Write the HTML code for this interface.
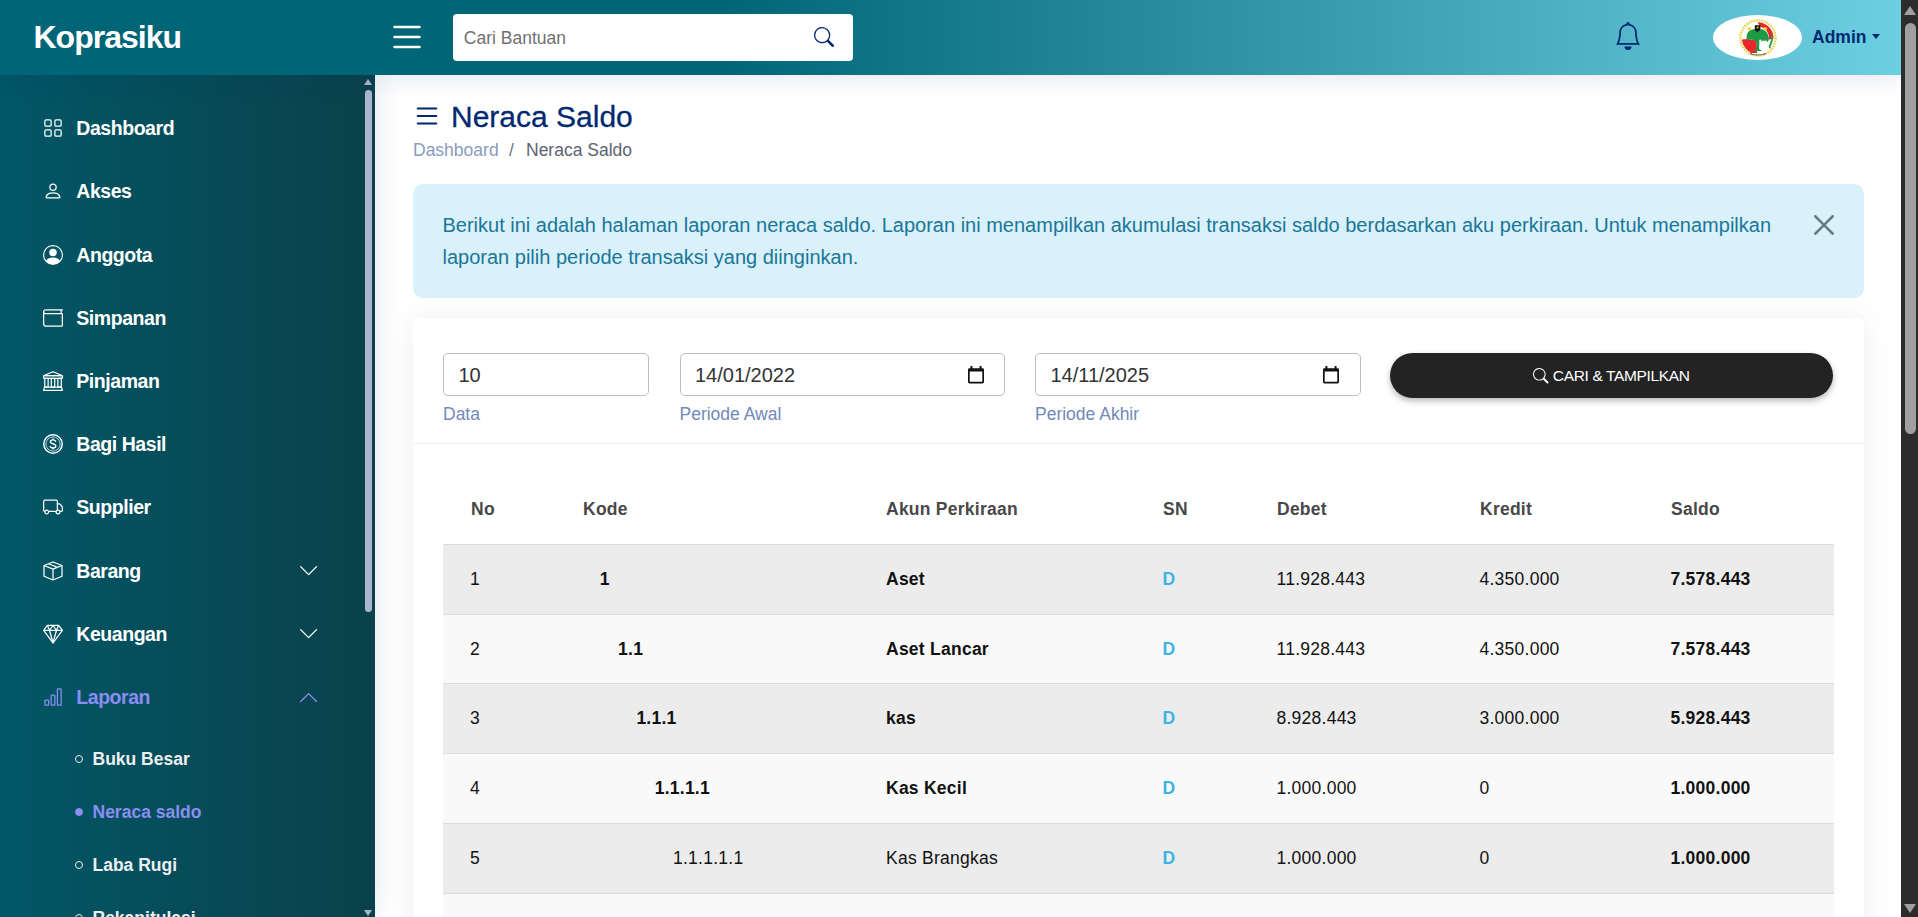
<!DOCTYPE html>
<html lang="id">
<head>
<meta charset="utf-8">
<title>Neraca Saldo - Koprasiku</title>
<style>
*{box-sizing:border-box;margin:0;padding:0}
html,body{width:1918px;height:917px;overflow:hidden;background:#fff;font-family:"Liberation Sans",sans-serif}
.ic{position:absolute;display:block;overflow:visible}
.tx{position:absolute;white-space:nowrap}
#main{position:absolute;left:0;top:0;width:1901px;height:917px;background:#fff;z-index:1}
#alert{position:absolute;left:413px;top:184px;width:1451px;height:113.7px;background:#d9f1fa;border-radius:10px}
#card{position:absolute;left:413px;top:318.3px;width:1451px;height:700px;background:#fff;border-radius:6px;box-shadow:0 0 30px rgba(0,0,0,.07)}
.inp{position:absolute;top:353px;height:42.7px;border:1.25px solid #bdbdbd;border-radius:5px;background:#fff}
#btn{position:absolute;left:1389.8px;top:352.8px;width:443.7px;height:44.9px;background:#232323;border-radius:23px;box-shadow:0 3px 6px rgba(0,0,0,.28)}
#divider{position:absolute;left:413px;top:442.5px;width:1451px;height:1.5px;background:#efefef}
.row{position:absolute;left:443px;width:1391px;height:70px;border-top:1px solid #dcdcdc}
#header{position:absolute;left:0;top:0;width:1901px;height:75px;background:linear-gradient(to right,#006576 0%,#006576 38%,#6dd0e2 100%);z-index:5;box-shadow:0 2.5px 25px rgba(1,41,112,.12)}
#logo{position:absolute;left:0;top:0;width:375px;height:75px;background:#006576}
#search{position:absolute;left:453px;top:14px;width:400px;height:46.5px;background:#fff;border-radius:4px;z-index:6}
#avatar{position:absolute;left:1712.6px;top:15px;width:89.4px;height:44.7px;border-radius:50%;background:#fff;z-index:6;display:flex;align-items:center;justify-content:center}
#caret{position:absolute;left:1871.6px;top:34.2px;width:0;height:0;border-left:4.6px solid transparent;border-right:4.6px solid transparent;border-top:5px solid #012970;z-index:7}
#sidebar{position:absolute;left:0;top:75px;width:375px;height:842px;background:linear-gradient(to right,#025767 0%,#0a414a 100%);overflow:hidden;z-index:4;box-shadow:0 0 25px rgba(1,41,112,.12)}
#sidebar .ic,#sidebar .tx{z-index:5}
.dot{position:absolute;left:74.8px;width:8.6px;height:8.6px;border:1.4px solid #e9edf1;border-radius:50%}
#sbthumb{position:absolute;left:365px;top:15px;width:6.8px;height:522px;border-radius:4px;background:#aab5d1}
#sbup{position:absolute;left:364.2px;top:3.9px;width:0;height:0;border-left:4.3px solid transparent;border-right:4.3px solid transparent;border-bottom:6px solid #aab5d1}
#sbdown{position:absolute;left:364.2px;top:835px;width:0;height:0;border-left:4.3px solid transparent;border-right:4.3px solid transparent;border-top:6px solid #aab5d1}
#pscroll{position:absolute;left:1901px;top:0;width:17px;height:917px;background:#2c2c2c;z-index:10}
#pthumb{position:absolute;left:4px;top:22.9px;width:11px;height:411.3px;border-radius:6px;background:#a0a0a0}
#pup{position:absolute;left:3.2px;top:6px;width:0;height:0;border-left:6.2px solid transparent;border-right:6.2px solid transparent;border-bottom:9.6px solid #a0a0a0}
#pdown{position:absolute;left:3.2px;top:904px;width:0;height:0;border-left:6.2px solid transparent;border-right:6.2px solid transparent;border-top:9.6px solid #a0a0a0}
</style>
</head>
<body>
<div id="main">
<svg class="ic" style="left:412.3px;top:101px;color:#012970" width="30" height="30" viewBox="0 0 16 16"><path fill="currentColor" fill-rule="evenodd" d="M2.5 12a.5.5 0 0 1 .5-.5h10a.5.5 0 0 1 0 1H3a.5.5 0 0 1-.5-.5zm0-4a.5.5 0 0 1 .5-.5h10a.5.5 0 0 1 0 1H3a.5.5 0 0 1-.5-.5zm0-4a.5.5 0 0 1 .5-.5h10a.5.5 0 0 1 0 1H3a.5.5 0 0 1-.5-.5z"/></svg>
<div class="tx " style="left:451px;top:97.44px;font-size:30px;line-height:39.0px;color:#012970;font-weight:normal;-webkit-text-stroke:0.3px #012970">Neraca Saldo</div>
<div class="tx " style="left:413px;top:138.74px;font-size:17.5px;line-height:22.75px;color:#899bbd;font-weight:normal">Dashboard</div>
<div class="tx " style="left:509px;top:138.74px;font-size:17.5px;line-height:22.75px;color:#6c757d;font-weight:normal">/</div>
<div class="tx " style="left:526px;top:138.74px;font-size:17.5px;line-height:22.75px;color:#5c6470;font-weight:normal">Neraca Saldo</div>
<div id="alert"></div>
<div class="tx " style="left:442.5px;top:211.86px;font-size:20px;line-height:26.0px;color:#1b7698;font-weight:normal">Berikut ini adalah halaman laporan neraca saldo. Laporan ini menampilkan akumulasi transaksi saldo berdasarkan aku perkiraan. Untuk menampilkan</div>
<div class="tx " style="left:442.5px;top:243.96px;font-size:20px;line-height:26.0px;color:#1b7698;font-weight:normal">laporan pilih periode transaksi yang diinginkan.</div>
<svg class="ic" style="left:1814px;top:215px;color:rgba(0,0,0,.5)" width="20" height="20" viewBox="0 0 16 16"><path fill="currentColor" d="M.293.293a1 1 0 0 1 1.414 0L8 6.586 14.293.293a1 1 0 1 1 1.414 1.414L9.414 8l6.293 6.293a1 1 0 0 1-1.414 1.414L8 9.414l-6.293 6.293a1 1 0 0 1-1.414-1.414L6.586 8 .293 1.707a1 1 0 0 1 0-1.414z"/></svg>
<div id="card"></div>
<div class="inp" style="left:443px;width:206px"></div>
<div class="inp" style="left:679.5px;width:325.5px"></div>
<div class="inp" style="left:1035px;width:325.5px"></div>
<div class="tx " style="left:458.5px;top:362.06px;font-size:20px;line-height:26.0px;color:#333;font-weight:normal">10</div>
<div class="tx " style="left:695px;top:362.06px;font-size:20px;line-height:26.0px;color:#333;font-weight:normal">14/01/2022</div>
<div class="tx " style="left:1050.5px;top:362.06px;font-size:20px;line-height:26.0px;color:#333;font-weight:normal">14/11/2025</div>
<svg class="ic" style="left:968px;top:365.7px" width="16" height="17.5" viewBox="0 0 16 17.5"><path fill="#111" fill-rule="evenodd" d="M1.4 2.3h13.2a1.4 1.4 0 0 1 1.4 1.4v12.4a1.4 1.4 0 0 1-1.4 1.4H1.4A1.4 1.4 0 0 1 0 16.1V3.7a1.4 1.4 0 0 1 1.4-1.4zM1.7 5.4v10.4h12.6V5.4z"/><rect fill="#111" x="2.4" y="0" width="2" height="3" rx=".6"/><rect fill="#111" x="11.6" y="0" width="2" height="3" rx=".6"/></svg>
<svg class="ic" style="left:1323.3px;top:365.7px" width="16" height="17.5" viewBox="0 0 16 17.5"><path fill="#111" fill-rule="evenodd" d="M1.4 2.3h13.2a1.4 1.4 0 0 1 1.4 1.4v12.4a1.4 1.4 0 0 1-1.4 1.4H1.4A1.4 1.4 0 0 1 0 16.1V3.7a1.4 1.4 0 0 1 1.4-1.4zM1.7 5.4v10.4h12.6V5.4z"/><rect fill="#111" x="2.4" y="0" width="2" height="3" rx=".6"/><rect fill="#111" x="11.6" y="0" width="2" height="3" rx=".6"/></svg>
<div class="tx " style="left:443px;top:402.64px;font-size:17.5px;line-height:22.75px;color:#7189b8;font-weight:normal">Data</div>
<div class="tx " style="left:679.5px;top:402.64px;font-size:17.5px;line-height:22.75px;color:#7189b8;font-weight:normal">Periode Awal</div>
<div class="tx " style="left:1035px;top:402.64px;font-size:17.5px;line-height:22.75px;color:#7189b8;font-weight:normal">Periode Akhir</div>
<div id="btn"></div>
<svg class="ic" style="left:1532.7px;top:367.6px;color:#fff" width="15.5" height="15.5" viewBox="0 0 16 16"><path fill="currentColor" d="M11.742 10.344a6.5 6.5 0 1 0-1.397 1.398h-.001c.03.04.062.078.098.115l3.85 3.85a1 1 0 0 0 1.415-1.414l-3.85-3.85a1.007 1.007 0 0 0-.115-.1zM12 6.5a5.5 5.5 0 1 1-11 0 5.5 5.5 0 0 1 11 0z"/></svg>
<div class="tx " style="left:1552.8px;top:366.4px;font-size:15.5px;line-height:20.15px;color:#fff;font-weight:normal;letter-spacing:-0.35px">CARI &amp; TAMPILKAN</div>
<div id="divider"></div>
<div class="tx " style="left:471px;top:497.54px;font-size:17.5px;line-height:22.75px;color:#484848;font-weight:bold;letter-spacing:0.25px">No</div>
<div class="tx " style="left:583px;top:497.54px;font-size:17.5px;line-height:22.75px;color:#484848;font-weight:bold;letter-spacing:0.25px">Kode</div>
<div class="tx " style="left:886px;top:497.54px;font-size:17.5px;line-height:22.75px;color:#484848;font-weight:bold;letter-spacing:0.25px">Akun Perkiraan</div>
<div class="tx " style="left:1163px;top:497.54px;font-size:17.5px;line-height:22.75px;color:#484848;font-weight:bold;letter-spacing:0.25px">SN</div>
<div class="tx " style="left:1277px;top:497.54px;font-size:17.5px;line-height:22.75px;color:#484848;font-weight:bold;letter-spacing:0.25px">Debet</div>
<div class="tx " style="left:1480px;top:497.54px;font-size:17.5px;line-height:22.75px;color:#484848;font-weight:bold;letter-spacing:0.25px">Kredit</div>
<div class="tx " style="left:1671px;top:497.54px;font-size:17.5px;line-height:22.75px;color:#484848;font-weight:bold;letter-spacing:0.25px">Saldo</div>
<div class="row" style="top:544.00px;background:#ececec"></div>
<div class="tx " style="left:470px;top:567.64px;font-size:17.5px;line-height:22.75px;color:#111;font-weight:normal;letter-spacing:0.25px">1</div>
<div class="tx " style="left:599.8px;top:567.64px;font-size:17.5px;line-height:22.75px;color:#111;font-weight:bold;letter-spacing:0.25px">1</div>
<div class="tx " style="left:886px;top:567.64px;font-size:17.5px;line-height:22.75px;color:#111;font-weight:bold;letter-spacing:0.25px">Aset</div>
<div class="tx " style="left:1162.5px;top:567.64px;font-size:17.5px;line-height:22.75px;color:#3ab4e4;font-weight:bold">D</div>
<div class="tx " style="left:1276.5px;top:567.64px;font-size:17.5px;line-height:22.75px;color:#111;font-weight:normal;letter-spacing:0.25px">11.928.443</div>
<div class="tx " style="left:1479.5px;top:567.64px;font-size:17.5px;line-height:22.75px;color:#111;font-weight:normal;letter-spacing:0.25px">4.350.000</div>
<div class="tx " style="left:1670.5px;top:567.64px;font-size:17.5px;line-height:22.75px;color:#111;font-weight:bold;letter-spacing:0.25px">7.578.443</div>
<div class="row" style="top:614.00px;background:#f9f9f9"></div>
<div class="tx " style="left:470px;top:637.64px;font-size:17.5px;line-height:22.75px;color:#111;font-weight:normal;letter-spacing:0.25px">2</div>
<div class="tx " style="left:618.1px;top:637.64px;font-size:17.5px;line-height:22.75px;color:#111;font-weight:bold;letter-spacing:0.25px">1.1</div>
<div class="tx " style="left:886px;top:637.64px;font-size:17.5px;line-height:22.75px;color:#111;font-weight:bold;letter-spacing:0.25px">Aset Lancar</div>
<div class="tx " style="left:1162.5px;top:637.64px;font-size:17.5px;line-height:22.75px;color:#3ab4e4;font-weight:bold">D</div>
<div class="tx " style="left:1276.5px;top:637.64px;font-size:17.5px;line-height:22.75px;color:#111;font-weight:normal;letter-spacing:0.25px">11.928.443</div>
<div class="tx " style="left:1479.5px;top:637.64px;font-size:17.5px;line-height:22.75px;color:#111;font-weight:normal;letter-spacing:0.25px">4.350.000</div>
<div class="tx " style="left:1670.5px;top:637.64px;font-size:17.5px;line-height:22.75px;color:#111;font-weight:bold;letter-spacing:0.25px">7.578.443</div>
<div class="row" style="top:683.00px;background:#ececec"></div>
<div class="tx " style="left:470px;top:706.64px;font-size:17.5px;line-height:22.75px;color:#111;font-weight:normal;letter-spacing:0.25px">3</div>
<div class="tx " style="left:636.4px;top:706.64px;font-size:17.5px;line-height:22.75px;color:#111;font-weight:bold;letter-spacing:0.25px">1.1.1</div>
<div class="tx " style="left:886px;top:706.64px;font-size:17.5px;line-height:22.75px;color:#111;font-weight:bold;letter-spacing:0.25px">kas</div>
<div class="tx " style="left:1162.5px;top:706.64px;font-size:17.5px;line-height:22.75px;color:#3ab4e4;font-weight:bold">D</div>
<div class="tx " style="left:1276.5px;top:706.64px;font-size:17.5px;line-height:22.75px;color:#111;font-weight:normal;letter-spacing:0.25px">8.928.443</div>
<div class="tx " style="left:1479.5px;top:706.64px;font-size:17.5px;line-height:22.75px;color:#111;font-weight:normal;letter-spacing:0.25px">3.000.000</div>
<div class="tx " style="left:1670.5px;top:706.64px;font-size:17.5px;line-height:22.75px;color:#111;font-weight:bold;letter-spacing:0.25px">5.928.443</div>
<div class="row" style="top:753.00px;background:#f9f9f9"></div>
<div class="tx " style="left:470px;top:776.64px;font-size:17.5px;line-height:22.75px;color:#111;font-weight:normal;letter-spacing:0.25px">4</div>
<div class="tx " style="left:654.7px;top:776.64px;font-size:17.5px;line-height:22.75px;color:#111;font-weight:bold;letter-spacing:0.25px">1.1.1.1</div>
<div class="tx " style="left:886px;top:776.64px;font-size:17.5px;line-height:22.75px;color:#111;font-weight:bold;letter-spacing:0.25px">Kas Kecil</div>
<div class="tx " style="left:1162.5px;top:776.64px;font-size:17.5px;line-height:22.75px;color:#3ab4e4;font-weight:bold">D</div>
<div class="tx " style="left:1276.5px;top:776.64px;font-size:17.5px;line-height:22.75px;color:#111;font-weight:normal;letter-spacing:0.25px">1.000.000</div>
<div class="tx " style="left:1479.5px;top:776.64px;font-size:17.5px;line-height:22.75px;color:#111;font-weight:normal;letter-spacing:0.25px">0</div>
<div class="tx " style="left:1670.5px;top:776.64px;font-size:17.5px;line-height:22.75px;color:#111;font-weight:bold;letter-spacing:0.25px">1.000.000</div>
<div class="row" style="top:823.00px;background:#ececec"></div>
<div class="tx " style="left:470px;top:846.64px;font-size:17.5px;line-height:22.75px;color:#111;font-weight:normal;letter-spacing:0.25px">5</div>
<div class="tx " style="left:673.0px;top:846.64px;font-size:17.5px;line-height:22.75px;color:#111;font-weight:normal;letter-spacing:0.25px">1.1.1.1.1</div>
<div class="tx " style="left:886px;top:846.64px;font-size:17.5px;line-height:22.75px;color:#111;font-weight:normal;letter-spacing:0.25px">Kas Brangkas</div>
<div class="tx " style="left:1162.5px;top:846.64px;font-size:17.5px;line-height:22.75px;color:#3ab4e4;font-weight:bold">D</div>
<div class="tx " style="left:1276.5px;top:846.64px;font-size:17.5px;line-height:22.75px;color:#111;font-weight:normal;letter-spacing:0.25px">1.000.000</div>
<div class="tx " style="left:1479.5px;top:846.64px;font-size:17.5px;line-height:22.75px;color:#111;font-weight:normal;letter-spacing:0.25px">0</div>
<div class="tx " style="left:1670.5px;top:846.64px;font-size:17.5px;line-height:22.75px;color:#111;font-weight:bold;letter-spacing:0.25px">1.000.000</div>
<div class="row" style="top:893.00px;background:#f9f9f9"></div>
</div>
<div id="header"><div id="logo"></div></div>
<div class="tx " style="left:33.5px;top:16.88px;font-size:32px;line-height:41.6px;color:#fff;font-weight:bold;z-index:7;letter-spacing:-1px">Koprasiku</div>
<svg class="ic" style="left:386.85px;top:17px;color:#fff;z-index:7" width="40" height="40" viewBox="0 0 16 16"><path fill="currentColor" fill-rule="evenodd" d="M2.5 12a.5.5 0 0 1 .5-.5h10a.5.5 0 0 1 0 1H3a.5.5 0 0 1-.5-.5zm0-4a.5.5 0 0 1 .5-.5h10a.5.5 0 0 1 0 1H3a.5.5 0 0 1-.5-.5zm0-4a.5.5 0 0 1 .5-.5h10a.5.5 0 0 1 0 1H3a.5.5 0 0 1-.5-.5z"/></svg>
<div id="search"></div>
<div class="tx " style="left:463.8px;top:26.64px;font-size:17.5px;line-height:22.75px;color:#707070;font-weight:normal;z-index:7">Cari Bantuan</div>
<svg class="ic" style="left:814.4px;top:27px;color:#012970;z-index:7" width="20" height="20" viewBox="0 0 16 16"><path fill="currentColor" d="M11.742 10.344a6.5 6.5 0 1 0-1.397 1.398h-.001c.03.04.062.078.098.115l3.85 3.85a1 1 0 0 0 1.415-1.414l-3.85-3.85a1.007 1.007 0 0 0-.115-.1zM12 6.5a5.5 5.5 0 1 1-11 0 5.5 5.5 0 0 1 11 0z"/></svg>
<svg class="ic" style="left:1614.2px;top:21.5px;color:#012970;z-index:7" width="28" height="28" viewBox="0 0 16 16"><path fill="currentColor" d="M8 16a2 2 0 0 0 2-2H6a2 2 0 0 0 2 2zM8 1.918l-.797.161A4.002 4.002 0 0 0 4 6c0 .628-.134 2.197-.459 3.742-.16.767-.376 1.566-.663 2.258h10.244c-.287-.692-.502-1.49-.663-2.258C12.134 8.197 12 6.628 12 6a4.002 4.002 0 0 0-3.203-3.92L8 1.917zM14.22 12c.223.447.481.801.78 1H1c.299-.199.557-.553.78-1C2.68 10.2 3 6.88 3 6c0-2.42 1.72-4.44 4.005-4.901a1 1 0 1 1 1.99 0A5.002 5.002 0 0 1 13 6c0 .88.32 4.2 1.22 6z"/></svg>
<div id="avatar"></div>
<svg class="ic" style="left:1738px;top:17.6px;z-index:7" width="40" height="40" viewBox="0 0 40 40"><circle cx="20" cy="20" r="17.6" fill="#fff" stroke="#e4d444" stroke-width="2.4" stroke-dasharray="1.6 1"/><path d="M19.5 4.2A16 16 0 0 1 35.6 20.5L31 21.5A12 12 0 0 0 22 8.5z" fill="#e8262c"/><path d="M3.8 21.5 Q5 30 13 35 L19 35 L18.6 23 Q12 20 3.8 21.5z" fill="#e8262c"/><path d="M8.5 21 Q8 13 14 11.5 L17 11 L20 13.8 L23 11 Q30 12 31 21 L30 24 Q26 22 22 24 L21 31 L24 33 L15 33 L18.5 31 L18.6 24 Q14 20 9 22z" fill="#1e9a45"/><path d="M21.3 22 L23 21.5 L23.5 25 L25 21.5 L26.5 25 L28 21.5 L29.5 26 L31.5 24 L30 30 L25.5 32.5 L21.5 31z" fill="#fff"/><path d="M33 14 L35 22 L32 31 L30.5 29 L33 22z" fill="#2f9f52"/><path d="M16.8 7.3h5.6v4.6l-2.8 2.4-2.8-2.4z" fill="#111"/><circle cx="19.6" cy="9.6" r="1" fill="#e8d000"/><circle cx="11.4" cy="10.9" r="1.8" fill="#efd84a"/><circle cx="27.2" cy="10.9" r="1.8" fill="#efd84a"/><path d="M12 35.5 Q20 38.5 28 35.5" fill="none" stroke="#444" stroke-width="1.2" stroke-dasharray=".8 .4"/></svg>
<div class="tx " style="left:1812px;top:26.24px;font-size:17.5px;line-height:22.75px;color:#012970;font-weight:bold;z-index:7">Admin</div>
<div id="caret"></div>
<div id="sidebar">
<svg class="ic" style="left:43.4px;top:43.1px;color:#fff" width="20" height="20" viewBox="0 0 16 16"><g fill="none" stroke="currentColor" stroke-width="1"><rect x="1.5" y="1.5" width="5" height="5" rx="1"/><rect x="9.5" y="1.5" width="5" height="5" rx="1"/><rect x="1.5" y="9.5" width="5" height="5" rx="1"/><rect x="9.5" y="9.5" width="5" height="5" rx="1"/></g></svg>
<div class="tx " style="left:76.3px;top:41.28px;font-size:19.5px;line-height:25.35px;color:#fff;font-weight:bold;letter-spacing:-0.45px">Dashboard</div>
<svg class="ic" style="left:43.4px;top:106.3px;color:#fff" width="20" height="20" viewBox="0 0 16 16"><path fill="currentColor" d="M8 8a3 3 0 1 0 0-6 3 3 0 0 0 0 6Zm2-3a2 2 0 1 1-4 0 2 2 0 0 1 4 0Zm4 8c0 1-1 1-1 1H3s-1 0-1-1 1-4 6-4 6 3 6 4Zm-1-.004c-.001-.246-.154-.986-.832-1.664C11.516 10.68 10.289 10 8 10c-2.29 0-3.516.68-4.168 1.332-.678.678-.83 1.418-.832 1.664h10Z"/></svg>
<div class="tx " style="left:76.3px;top:104.48px;font-size:19.5px;line-height:25.35px;color:#fff;font-weight:bold;letter-spacing:-0.45px">Akses</div>
<svg class="ic" style="left:43.4px;top:169.5px;color:#fff" width="20" height="20" viewBox="0 0 16 16"><path fill="currentColor" d="M11 6a3 3 0 1 1-6 0 3 3 0 0 1 6 0z"/><path fill="currentColor" fill-rule="evenodd" d="M0 8a8 8 0 1 1 16 0A8 8 0 0 1 0 8zm8-7a7 7 0 0 0-5.468 11.37C3.242 11.226 4.805 10 8 10s4.757 1.225 5.468 2.37A7 7 0 0 0 8 1z"/></svg>
<div class="tx " style="left:76.3px;top:167.68px;font-size:19.5px;line-height:25.35px;color:#fff;font-weight:bold;letter-spacing:-0.45px">Anggota</div>
<svg class="ic" style="left:43.4px;top:232.7px;color:#fff" width="20" height="20" viewBox="0 0 16 16"><path fill="currentColor" fill-rule="evenodd" d="M0 3a2 2 0 0 1 2-2h13.5a.5.5 0 0 1 0 1H15v2a1 1 0 0 1 1 1v8.5a1.5 1.5 0 0 1-1.5 1.5h-12A2.5 2.5 0 0 1 0 12.5V3zm1 1.732V12.5A1.5 1.5 0 0 0 2.5 14h12a.5.5 0 0 0 .5-.5V5H2a1.99 1.99 0 0 1-1-.268zM1 3a1 1 0 0 0 1 1h12V2H2a1 1 0 0 0-1 1z"/></svg>
<div class="tx " style="left:76.3px;top:230.88px;font-size:19.5px;line-height:25.35px;color:#fff;font-weight:bold;letter-spacing:-0.45px">Simpanan</div>
<svg class="ic" style="left:43.4px;top:295.9px;color:#fff" width="20" height="20" viewBox="0 0 16 16"><g fill="none" stroke="currentColor" stroke-width="1" stroke-linejoin="round"><path d="M8 .6 15.2 3.6H.8z"/><rect x=".5" y="3.6" width="15" height="2.3" rx=".4"/><rect x="1.4" y="5.9" width="2.7" height="7"/><rect x="6.65" y="5.9" width="2.7" height="7"/><rect x="11.9" y="5.9" width="2.7" height="7"/><path d="M1.2 12.9h13.6l.7 2.6H.5z"/></g></svg>
<div class="tx " style="left:76.3px;top:294.08px;font-size:19.5px;line-height:25.35px;color:#fff;font-weight:bold;letter-spacing:-0.45px">Pinjaman</div>
<svg class="ic" style="left:43.4px;top:359.1px;color:#fff" width="20" height="20" viewBox="0 0 16 16"><g fill="none" stroke="currentColor"><circle cx="8" cy="8" r="7.4" stroke-width="1.15"/><circle cx="8" cy="8" r="5.7" stroke-width=".6"/><path stroke-width="1.15" stroke-linecap="round" d="M10.1 5.7C9.8 5.1 9 4.7 8 4.7 6.8 4.7 5.9 5.3 5.9 6.3 5.9 8.2 10.2 7.4 10.2 9.6 10.2 10.6 9.3 11.2 8 11.2 6.9 11.2 6.1 10.8 5.8 10.1M8 4v.7M8 11.2v.8"/></g></svg>
<div class="tx " style="left:76.3px;top:357.28px;font-size:19.5px;line-height:25.35px;color:#fff;font-weight:bold;letter-spacing:-0.45px">Bagi Hasil</div>
<svg class="ic" style="left:43.4px;top:422.3px;color:#fff" width="20" height="20" viewBox="0 0 16 16"><path fill="currentColor" d="M0 3.5A1.5 1.5 0 0 1 1.5 2h9A1.5 1.5 0 0 1 12 3.5V5h1.02a1.5 1.5 0 0 1 1.17.563l1.481 1.85a1.5 1.5 0 0 1 .329.938V10.5a1.5 1.5 0 0 1-1.5 1.5H14a2 2 0 1 1-4 0H5a2 2 0 1 1-3.998-.085A1.5 1.5 0 0 1 0 10.5v-7zm1.294 7.456A1.999 1.999 0 0 1 4.732 11h5.536a2.01 2.01 0 0 1 .732-.732V3.5a.5.5 0 0 0-.5-.5h-9a.5.5 0 0 0-.5.5v7a.5.5 0 0 0 .294.456zM12 10a2 2 0 0 1 1.732 1h.768a.5.5 0 0 0 .5-.5V8.35a.5.5 0 0 0-.11-.312l-1.48-1.85A.5.5 0 0 0 13.02 6H12v4zm-9 1a1 1 0 1 0 0 2 1 1 0 0 0 0-2zm9 0a1 1 0 1 0 0 2 1 1 0 0 0 0-2z"/></svg>
<div class="tx " style="left:76.3px;top:420.48px;font-size:19.5px;line-height:25.35px;color:#fff;font-weight:bold;letter-spacing:-0.45px">Supplier</div>
<svg class="ic" style="left:43.4px;top:485.5px;color:#fff" width="20" height="20" viewBox="0 0 16 16"><g fill="none" stroke="currentColor" stroke-width="1" stroke-linejoin="round"><path d="M8 .8 15.2 3.6v8.6L8 15.2.8 12.2V3.6z"/><path d="M.8 3.6 8 6.5l7.2-2.9M8 6.5v8.7M4.4 2.2l7.2 2.9"/></g></svg>
<div class="tx " style="left:76.3px;top:483.68px;font-size:19.5px;line-height:25.35px;color:#fff;font-weight:bold;letter-spacing:-0.45px">Barang</div>
<svg class="ic" style="left:297.6px;top:485.15px;color:#fff" width="21.2" height="21.2" viewBox="0 0 16 16"><path fill="currentColor" fill-rule="evenodd" d="M1.646 4.646a.5.5 0 0 1 .708 0L8 10.293l5.646-5.647a.5.5 0 0 1 .708.708l-6 6a.5.5 0 0 1-.708 0l-6-6a.5.5 0 0 1 0-.708z"/></svg>
<svg class="ic" style="left:43.4px;top:548.7px;color:#fff" width="20" height="20" viewBox="0 0 16 16"><g fill="none" stroke="currentColor" stroke-width="1" stroke-linejoin="round"><path d="M3.5 1h9l3 4-7.5 10L.5 5z"/><path d="M.5 5h15M3.5 1 5.2 5 8 15 10.8 5 12.5 1M5.2 5 8 1.2 10.8 5"/></g></svg>
<div class="tx " style="left:76.3px;top:546.88px;font-size:19.5px;line-height:25.35px;color:#fff;font-weight:bold;letter-spacing:-0.45px">Keuangan</div>
<svg class="ic" style="left:297.6px;top:548.35px;color:#fff" width="21.2" height="21.2" viewBox="0 0 16 16"><path fill="currentColor" fill-rule="evenodd" d="M1.646 4.646a.5.5 0 0 1 .708 0L8 10.293l5.646-5.647a.5.5 0 0 1 .708.708l-6 6a.5.5 0 0 1-.708 0l-6-6a.5.5 0 0 1 0-.708z"/></svg>
<svg class="ic" style="left:43.4px;top:611.9px;color:#8b8df2" width="20" height="20" viewBox="0 0 16 16"><path fill="currentColor" d="M4 11H2v3h2v-3zm5-4H7v7h2V7zm5-5v12h-2V2h2zm-2-1a1 1 0 0 0-1 1v12a1 1 0 0 0 1 1h2a1 1 0 0 0 1-1V2a1 1 0 0 0-1-1h-2zM6 7a1 1 0 0 1 1-1h2a1 1 0 0 1 1 1v7a1 1 0 0 1-1 1H7a1 1 0 0 1-1-1V7zm-5 4a1 1 0 0 1 1-1h2a1 1 0 0 1 1 1v3a1 1 0 0 1-1 1H2a1 1 0 0 1-1-1v-3z"/></svg>
<div class="tx " style="left:76.3px;top:610.08px;font-size:19.5px;line-height:25.35px;color:#8b8df2;font-weight:bold;letter-spacing:-0.45px">Laporan</div>
<svg class="ic" style="left:297.6px;top:611.55px;color:#8b8df2" width="21.2" height="21.2" viewBox="0 0 16 16"><path fill="currentColor" fill-rule="evenodd" d="M7.646 4.646a.5.5 0 0 1 .708 0l6 6a.5.5 0 0 1-.708.708L8 5.707l-5.646 5.647a.5.5 0 0 1-.708-.708l6-6z"/></svg>
<div class="dot" style="top:679.50px"></div>
<div class="tx " style="left:92.5px;top:672.74px;font-size:17.5px;line-height:22.75px;color:#eef0f3;font-weight:bold">Buku Besar</div>
<div class="dot" style="top:732.50px;background:#8b8df2;border-color:#8b8df2"></div>
<div class="tx " style="left:92.5px;top:725.74px;font-size:17.5px;line-height:22.75px;color:#8b8df2;font-weight:bold">Neraca saldo</div>
<div class="dot" style="top:785.50px"></div>
<div class="tx " style="left:92.5px;top:778.74px;font-size:17.5px;line-height:22.75px;color:#eef0f3;font-weight:bold">Laba Rugi</div>
<div class="dot" style="top:838.50px"></div>
<div class="tx " style="left:92.5px;top:831.74px;font-size:17.5px;line-height:22.75px;color:#eef0f3;font-weight:bold">Rekapitulasi</div>
<div id="sbthumb"></div><div id="sbup"></div><div id="sbdown"></div>
</div>
<div id="pscroll"><div id="pthumb"></div><div id="pup"></div><div id="pdown"></div></div>
</body>
</html>
